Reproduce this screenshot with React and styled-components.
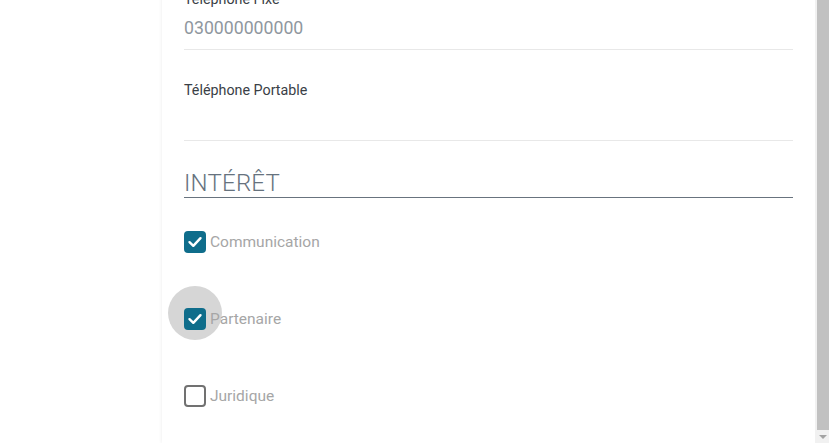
import React from 'react'
import styled, { createGlobalStyle } from 'styled-components'

const GlobalStyle = createGlobalStyle`
    html, body {
        margin: 0;
        padding: 0;
        background: #ffffff;
        overflow: hidden;
    }
    body {
        font-family: Roboto, "Liberation Sans", Arial, sans-serif;
    }
`

const interests = [
    { label: 'Communication', checked: true },
    { label: 'Partenaire', checked: true, focused: true },
    { label: 'Juridique', checked: false }
]

const CheckIcon = () => (
    <svg width="22" height="22" viewBox="0 0 22 22">
        <polyline points="5.5,11.2 9.3,14.8 16.5,7.2" fill="none" stroke="#ffffff" strokeWidth="2.4" strokeLinecap="round" strokeLinejoin="round" />
    </svg>
)

const App = () => {
    return (
        <Page>
            <GlobalStyle />
            <Main>
                <Card>
                    <Field>
                        <FieldLabel>Téléphone Fixe</FieldLabel>
                        <FieldValue>030000000000</FieldValue>
                    </Field>
                    <Field>
                        <FieldLabel>Téléphone Portable</FieldLabel>
                        <FieldValue />
                    </Field>

                    <SectionTitle>INTÉRÊT</SectionTitle>

                    <CheckList>
                        {interests.map((item, index) => (
                            <CheckRow key={index}>
                                <BoxWrap>
                                    {item.focused ? <Ripple /> : null}
                                    <Box checked={item.checked}>
                                        {item.checked ? <CheckIcon /> : null}
                                    </Box>
                                </BoxWrap>
                                <CheckLabel>{item.label}</CheckLabel>
                            </CheckRow>
                        ))}
                    </CheckList>
                </Card>
            </Main>
            <Scrollbar>
                <Thumb />
                <ArrowDown />
            </Scrollbar>
        </Page>
    )
}

export default App

const Page = styled.div`
    display: flex;
    flex-direction: row;
    width: 829px;
    height: 443px;
    overflow: hidden;
`

const Main = styled.div`
    flex: 1;
    display: flex;
    padding-left: 162px;
    overflow: hidden;
`

const Card = styled.div`
    width: 609px;
    padding: 0 22px;
    margin-top: -41px;
    background: #ffffff;
    box-shadow: -1px 0 3px rgba(0, 0, 0, 0.05);
    display: flex;
    flex-direction: column;
`

const Field = styled.div`
    padding-top: 32px;
    padding-bottom: 9px;
    border-bottom: 1px solid #e8e8e8;
`

const FieldLabel = styled.div`
    font-size: 14.3px;
    line-height: 16px;
    color: #3a4046;
`

const FieldValue = styled.div`
    margin-top: 9px;
    min-height: 24px;
    font-size: 17.7px;
    line-height: 24px;
    color: #8f979e;
`

const SectionTitle = styled.div`
    margin-top: 28px;
    font-size: 24px;
    font-weight: 300;
    line-height: 28px;
    letter-spacing: 0.2px;
    color: #66727e;
    border-bottom: 1px solid #68737e;
`

const CheckList = styled.div`
    display: flex;
    flex-direction: column;
    gap: 55px;
    padding-top: 33px;
`

const CheckRow = styled.div`
    display: flex;
    flex-direction: row;
    align-items: center;
    height: 22px;
`

const BoxWrap = styled.div`
    position: relative;
    width: 22px;
    height: 22px;
`

const Ripple = styled.div`
    position: absolute;
    left: -16px;
    top: -22px;
    width: 54px;
    height: 54px;
    border-radius: 50%;
    background: #d6d6d6;
`

const Box = styled.div`
    position: relative;
    box-sizing: border-box;
    width: 22px;
    height: 22px;
    border-radius: 4px;
    background: ${props => props.checked ? '#0f6d8b' : 'transparent'};
    border: ${props => props.checked ? 'none' : '2px solid #717171'};
    display: flex;
`

const CheckLabel = styled.div`
    position: relative;
    margin-left: 4px;
    font-size: 15.5px;
    line-height: 18px;
    color: #a6a6a6;
`

const Scrollbar = styled.div`
    width: 14px;
    height: 443px;
    background: #f1f1f1;
    display: flex;
    flex-direction: column;
`

const Thumb = styled.div`
    flex: 1;
    margin-left: 2px;
    background: #c1c1c1;
`

const ArrowDown = styled.div`
    height: 13px;
    display: flex;
    justify-content: center;
    align-items: center;
    padding-left: 2px;
    &::after {
        content: '';
        border-left: 4px solid transparent;
        border-right: 4px solid transparent;
        border-top: 4px solid #a3a3a3;
    }
`
